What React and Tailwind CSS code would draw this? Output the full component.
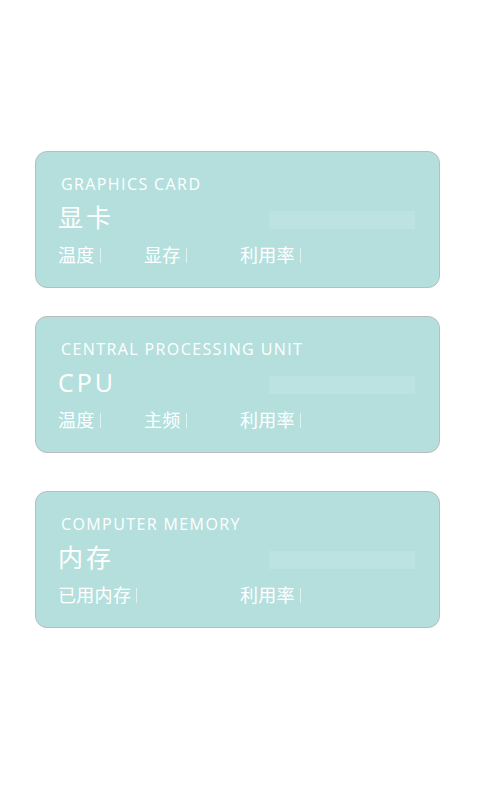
export default function App() {
  const cards = [
    {
      title: "GRAPHICS CARD",
      name: "显卡",
      cols: [
        { label: "温度", w: "w-[86px]" },
        { label: "显存", w: "w-[96px]" },
        { label: "利用率", w: "" },
      ],
      mt: "mt-[150px]",
    },
    {
      title: "CENTRAL PROCESSING UNIT",
      name: "CPU",
      cols: [
        { label: "温度", w: "w-[86px]" },
        { label: "主频", w: "w-[96px]" },
        { label: "利用率", w: "" },
      ],
      mt: "mt-[28px]",
    },
    {
      title: "COMPUTER MEMORY",
      name: "内存",
      cols: [
        { label: "已用内存", w: "w-[182px]" },
        { label: "利用率", w: "" },
      ],
      mt: "mt-[38px]",
    },
  ];
  return (
    <div
      className="w-[481px] h-[800px] bg-white"
      style={{ fontFamily: '"Open Sans", "Noto Sans CJK SC", sans-serif' }}
    >
      <div className="pt-px" />
      {cards.map((c, i) => (
        <div
          key={i}
          className={`${c.mt} ml-[35px] w-[405px] h-[137px] rounded-[12px] border border-[#bcbcbc] bg-[#b4dfdd] text-white flex flex-col`}
        >
          <div className="mt-[22px] ml-[25px] text-[16px] leading-[20px] tracking-[1.4px]">
            {c.title}
          </div>
          <div className="mt-[7px] flex items-center justify-between h-[32px]">
            <div className="ml-[22px] text-[25px] leading-[32px] tracking-[3px]">
              {c.name}
            </div>
            <div className="mr-[24px] mt-[6px] w-[146px] h-[18px] bg-[#bce3e1]" />
          </div>
          <div className="mt-[11px] ml-[22px] flex items-center h-[22px]">
            {c.cols.map((col, j) => (
              <div key={j} className={`${col.w} flex items-center`}>
                <span className="text-[18px] leading-[22px] tracking-[0.3px]">{col.label}</span>
                <span className="ml-[5px] w-px h-[15px] bg-[#dff1f0]" />
              </div>
            ))}
          </div>
        </div>
      ))}
    </div>
  );
}
